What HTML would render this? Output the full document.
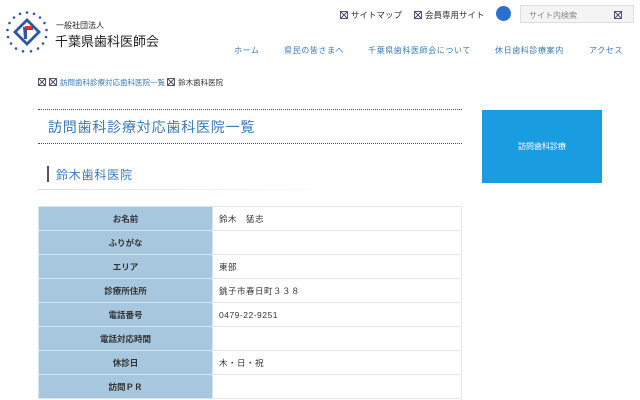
<!DOCTYPE html>
<html><head><meta charset="utf-8"><style>
*{margin:0;padding:0;box-sizing:border-box}
body{width:640px;height:400px;overflow:hidden;background:#fff;font-family:"Liberation Sans","Noto Sans CJK JP",sans-serif;position:relative;color:#333}
.a{position:absolute;white-space:nowrap}
.x{display:inline-block;width:8px;height:8px;border:1px solid #557;vertical-align:-1px;margin-right:3px;background:linear-gradient(45deg,transparent 45%,#557 45%,#557 55%,transparent 55%),linear-gradient(-45deg,transparent 45%,#557 45%,#557 55%,transparent 55%)}
.nav{font-size:8px;color:#3a7ab8;top:45px;letter-spacing:0.6px}
table{position:absolute;left:38px;top:206px;width:424px;border-collapse:collapse;font-size:8.5px}
td{height:24px;border:1px solid #e4e8ec}
td.l{background:#a7c7df;width:174px;text-align:center;font-weight:bold;color:#333;border-color:#d8e6f0}
td.v{padding-left:6px;color:#333;letter-spacing:0.5px}
</style></head><body>
<svg class="a" style="left:5px;top:10px" width="44" height="44" viewBox="0 0 44 44">
<g fill="#2f56a6"><circle cx="22" cy="2.5" r="1.3"/><circle cx="29" cy="3.8" r="1.3"/><circle cx="35" cy="7.5" r="1.3"/><circle cx="39.5" cy="13" r="1.3"/><circle cx="41.5" cy="20" r="1.3"/><circle cx="41" cy="27" r="1.3"/><circle cx="38" cy="33.5" r="1.3"/><circle cx="33" cy="38.5" r="1.3"/><circle cx="26" cy="41.3" r="1.3"/><circle cx="18" cy="41.3" r="1.3"/><circle cx="11" cy="38.5" r="1.3"/><circle cx="6" cy="33.5" r="1.3"/><circle cx="3" cy="27" r="1.3"/><circle cx="2.5" cy="20" r="1.3"/><circle cx="4.5" cy="13" r="1.3"/><circle cx="9" cy="7.5" r="1.3"/><circle cx="15" cy="3.8" r="1.3"/></g>
<path d="M22 8 L36 22 L22 36 L8 22Z" fill="#2f56a6"/><path d="M22 12 L32 22 L22 32 L12 22Z" fill="#fff"/>
<path d="M18 17h10v3h-6v9h-3z" fill="#2f56a6"/><path d="M20 16h7v3h-7z" fill="#d33"/>
</svg>
<div class="a" style="left:56px;top:20px;font-size:8px;color:#222">一般社団法人</div>
<div class="a" style="left:55px;top:31px;font-size:13px;color:#222">千葉県歯科医師会</div>
<div class="a" style="left:340px;top:9px;font-size:8.5px;color:#333"><span class="x"></span>サイトマップ</div>
<div class="a" style="left:414px;top:9px;font-size:8.5px;color:#333"><span class="x"></span>会員専用サイト</div>
<div class="a" style="left:496px;top:6px;width:15px;height:15px;border-radius:50%;background:#2a70d0"></div>
<div class="a" style="left:520px;top:5px;width:114px;height:18px;background:#f4f4f4;border:1px solid #ddd;font-size:8px;color:#888;padding:4px 0 0 8px">サイト内検索<span class="x" style="position:absolute;right:8px;top:5px"></span></div>
<div class="a nav" style="left:234px">ホーム</div>
<div class="a nav" style="left:284px">県民の皆さまへ</div>
<div class="a nav" style="left:368px">千葉県歯科医師会について</div>
<div class="a nav" style="left:495px">休日歯科診療案内</div>
<div class="a nav" style="left:589px">アクセス</div>
<div class="a" style="left:38px;top:77px;font-size:7.5px;color:#3a7ab8"><span class="x"></span><span class="x"></span>訪問歯科診療対応歯科医院一覧 <span class="x"></span><span style="color:#333">鈴木歯科医院</span></div>
<div class="a" style="left:38px;top:109px;width:424px;border-top:1px dotted #456"></div>
<div class="a" style="left:48px;top:117px;font-size:14px;color:#3a7ab8;letter-spacing:0.8px">訪問歯科診療対応歯科医院一覧</div>
<div class="a" style="left:38px;top:143px;width:424px;border-top:1px dotted #456"></div>
<div class="a" style="left:47px;top:166px;width:2px;height:16px;background:#556"></div>
<div class="a" style="left:56px;top:166px;font-size:12px;color:#3a7ab8;letter-spacing:0.8px">鈴木歯科医院</div>
<div class="a" style="left:38px;top:189px;width:300px;height:1px;background:linear-gradient(90deg,#ddd,#eee,transparent)"></div>
<div class="a" style="left:482px;top:110px;width:120px;height:73px;background:#1a9ce0;color:#fff;font-size:8px;text-align:center;line-height:73px">訪問歯科診療</div>
<table>
<tr><td class="l">お名前</td><td class="v">鈴木　猛志</td></tr>
<tr><td class="l">ふりがな</td><td class="v"></td></tr>
<tr><td class="l">エリア</td><td class="v">東部</td></tr>
<tr><td class="l">診療所住所</td><td class="v">銚子市春日町３３８</td></tr>
<tr><td class="l">電話番号</td><td class="v">0479-22-9251</td></tr>
<tr><td class="l">電話対応時間</td><td class="v"></td></tr>
<tr><td class="l">休診日</td><td class="v">木・日・祝</td></tr>
<tr><td class="l">訪問ＰＲ</td><td class="v"></td></tr>
</table>
</body></html>
